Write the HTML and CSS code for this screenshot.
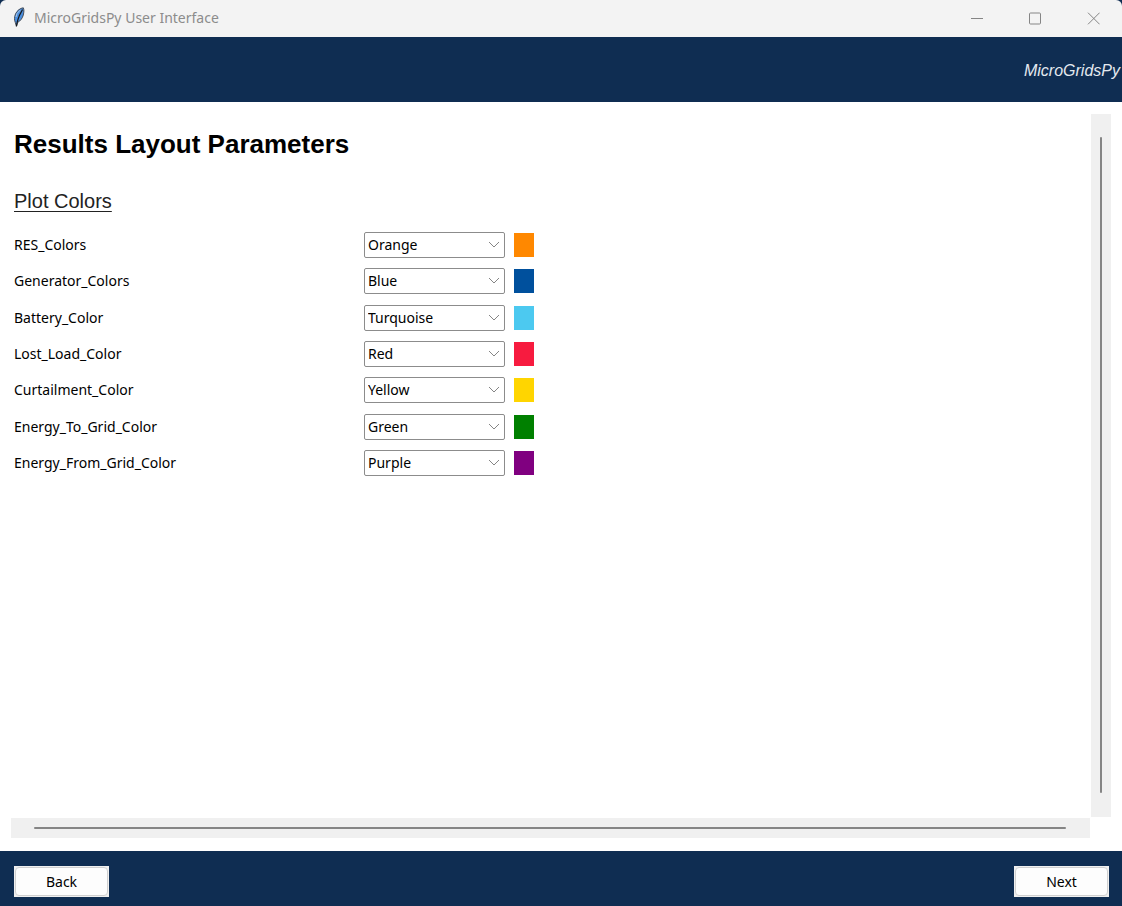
FILE: index.html
```html
<!DOCTYPE html>
<html lang="en">
<head>
<meta charset="utf-8">
<title>MicroGridsPy User Interface</title>
<link rel="stylesheet" href="styles.css">
</head>
<body>
<div class="window">
  <div class="titlebar">
    <svg class="feather" viewBox="0 0 12 20" width="12" height="20" aria-hidden="true">
      <path d="M10.300 0.800C7.500 1 4 3.500 2.500 7C1.200 10 1.200 13 2.300 15.500L3.400 19.500L4.600 15.500C7.500 14 9.500 11 10.300 8C11 5 11.200 2.500 10.300 0.800Z" fill="#4a8fe0" stroke="#3c4148" stroke-width="0.900"/>
      <path d="M9.500 2.500C8 6 6.500 7.500 5.800 10C5 12.500 4 14.500 3.500 19" fill="none" stroke="#16181c" stroke-width="1.200"/>
      <path d="M7.500 2.800L4 6.500L3 10" fill="none" stroke="#a9c6e6" stroke-width="1"/>
    </svg>
    <span class="caption">MicroGridsPy User Interface</span>
    <div class="controls">
      <button class="control" aria-label="Minimize"><svg viewBox="0 0 14 14" width="14" height="14"><path d="M1 7.500H13"/></svg></button>
      <button class="control" aria-label="Maximize"><svg viewBox="0 0 14 14" width="14" height="14"><rect x="1.500" y="2" width="11" height="11" rx="1"/></svg></button>
      <button class="control" aria-label="Close"><svg viewBox="0 0 14 14" width="14" height="14"><path d="M2 1.700L13.600 13.300M13.600 1.700L2 13.300"/></svg></button>
    </div>
  </div>
  <header class="banner">MicroGridsPy</header>
  <main class="scroller">
    <div class="content">
      <h1 class="title">Results Layout Parameters</h1>
      <h2 class="subtitle">Plot Colors</h2>
      <form class="params">
        <div class="param">
          <label for="res">RES_Colors</label>
          <div class="combo"><select id="res"><option selected>Orange</option><option>Blue</option></select><svg class="chevron" viewBox="0 0 12 8" width="12" height="8"><path d="M1 1L6 6L11 1"/></svg></div>
          <span class="swatch orange"></span>
        </div>
        <div class="param">
          <label for="generator">Generator_Colors</label>
          <div class="combo"><select id="generator"><option selected>Blue</option><option>Orange</option></select><svg class="chevron" viewBox="0 0 12 8" width="12" height="8"><path d="M1 1L6 6L11 1"/></svg></div>
          <span class="swatch blue"></span>
        </div>
        <div class="param">
          <label for="battery">Battery_Color</label>
          <div class="combo"><select id="battery"><option selected>Turquoise</option><option>Blue</option></select><svg class="chevron" viewBox="0 0 12 8" width="12" height="8"><path d="M1 1L6 6L11 1"/></svg></div>
          <span class="swatch turquoise"></span>
        </div>
        <div class="param">
          <label for="lost">Lost_Load_Color</label>
          <div class="combo"><select id="lost"><option selected>Red</option><option>Blue</option></select><svg class="chevron" viewBox="0 0 12 8" width="12" height="8"><path d="M1 1L6 6L11 1"/></svg></div>
          <span class="swatch red"></span>
        </div>
        <div class="param">
          <label for="curtailment">Curtailment_Color</label>
          <div class="combo"><select id="curtailment"><option selected>Yellow</option><option>Blue</option></select><svg class="chevron" viewBox="0 0 12 8" width="12" height="8"><path d="M1 1L6 6L11 1"/></svg></div>
          <span class="swatch yellow"></span>
        </div>
        <div class="param">
          <label for="togrid">Energy_To_Grid_Color</label>
          <div class="combo"><select id="togrid"><option selected>Green</option><option>Blue</option></select><svg class="chevron" viewBox="0 0 12 8" width="12" height="8"><path d="M1 1L6 6L11 1"/></svg></div>
          <span class="swatch green"></span>
        </div>
        <div class="param">
          <label for="fromgrid">Energy_From_Grid_Color</label>
          <div class="combo"><select id="fromgrid"><option selected>Purple</option><option>Blue</option></select><svg class="chevron" viewBox="0 0 12 8" width="12" height="8"><path d="M1 1L6 6L11 1"/></svg></div>
          <span class="swatch purple"></span>
        </div>
      </form>
    </div>
    <div class="track vertical"><div class="thumb"></div></div>
    <div class="track horizontal"><div class="thumb"></div></div>
  </main>
  <footer class="actions">
    <div class="button-frame"><button class="action">Back</button></div>
    <div class="button-frame"><button class="action">Next</button></div>
  </footer>
</div>
</body>
</html>
```
FILE: styles.css
```css
* {
  box-sizing: border-box;
}

body {
  margin: 0;
  background: #0f2d52;
  color: #000;
  font: 14px/20px "Noto Sans", sans-serif;
}

.window {
  display: flex;
  flex-direction: column;
  min-height: 100vh;
  overflow: hidden;
  border-radius: 6px 6px 0 0;
}

.titlebar {
  display: flex;
  align-items: center;
  height: 37px;
  padding: 0 0 2px 13px;
  background: #f3f3f3;
  color: #8c8c8c;
}

.feather {
  margin-bottom: 2px;
}

.caption {
  margin-left: 9px;
}

.controls {
  display: flex;
  align-self: stretch;
  margin-left: auto;
}

.control {
  display: grid;
  place-items: center;
  width: 58px;
  padding: 0;
  border: 0;
  background: none;
}

.control svg {
  fill: none;
  stroke: #858585;
  stroke-width: 1;
}

.banner {
  display: flex;
  align-items: center;
  justify-content: flex-end;
  height: 65px;
  padding: 2px 2px 0 0;
  background: #0f2d52;
  color: #e4e9ef;
  font: italic 16px/20px "Liberation Sans", sans-serif;
}

.scroller {
  display: grid;
  flex: 1;
  grid-template: 1fr 20px / 1fr 20px;
  gap: 1px;
  padding: 12px 11px 13px;
  background: #fff;
}

.content {
  padding: 14px 3px;
}

.title {
  margin: 0;
  font: bold 26px/32px "Liberation Sans", sans-serif;
}

.subtitle {
  margin: 29px 0 14px;
  color: #222;
  font: 20px/24px "Liberation Sans", sans-serif;
  text-decoration: underline;
  text-decoration-thickness: 1px;
  text-underline-offset: 3px;
}

.params {
  display: grid;
  grid-auto-rows: 1fr;
  min-height: 254px;
}

.param {
  display: grid;
  grid-template-columns: 350px 141px 29px;
  align-items: center;
}

.combo {
  display: grid;
  align-items: center;
}

.combo select {
  grid-area: 1 / 1;
  height: 26px;
  padding: 0 24px 0 3px;
  border: 1px solid #8c8c8c;
  border-radius: 2px;
  appearance: none;
  background: #fff;
  color: #000;
  font: inherit;
}

.chevron {
  grid-area: 1 / 1;
  justify-self: end;
  margin-right: 5px;
  fill: none;
  stroke: #858585;
  pointer-events: none;
}

.swatch {
  width: 20px;
  height: 24px;
  margin-left: 9px;
}

.orange { background: #ff8800; }
.blue { background: #00509d; }
.turquoise { background: #4cc9f0; }
.red { background: #f71b3f; }
.yellow { background: #ffd500; }
.green { background: #008000; }
.purple { background: #800080; }

.track {
  display: flex;
  background: #f0f0f0;
}

.thumb {
  flex: 1;
  border-radius: 1px;
  background: #858585;
}

.vertical {
  padding: 23px 9px 24px;
}

.horizontal {
  padding: 9px 24px 9px 23px;
}

.actions {
  display: flex;
  justify-content: space-between;
  align-items: center;
  height: 55px;
  padding: 6px 13px 0 14px;
  background: #0f2d52;
}

.button-frame {
  padding: 1px;
  background: #f0f0f0;
}

.action {
  width: 93px;
  height: 29px;
  border: 1px solid #d0d0d0;
  border-radius: 4px;
  background: #fdfdfd;
  color: #000;
  font: inherit;
}
```
